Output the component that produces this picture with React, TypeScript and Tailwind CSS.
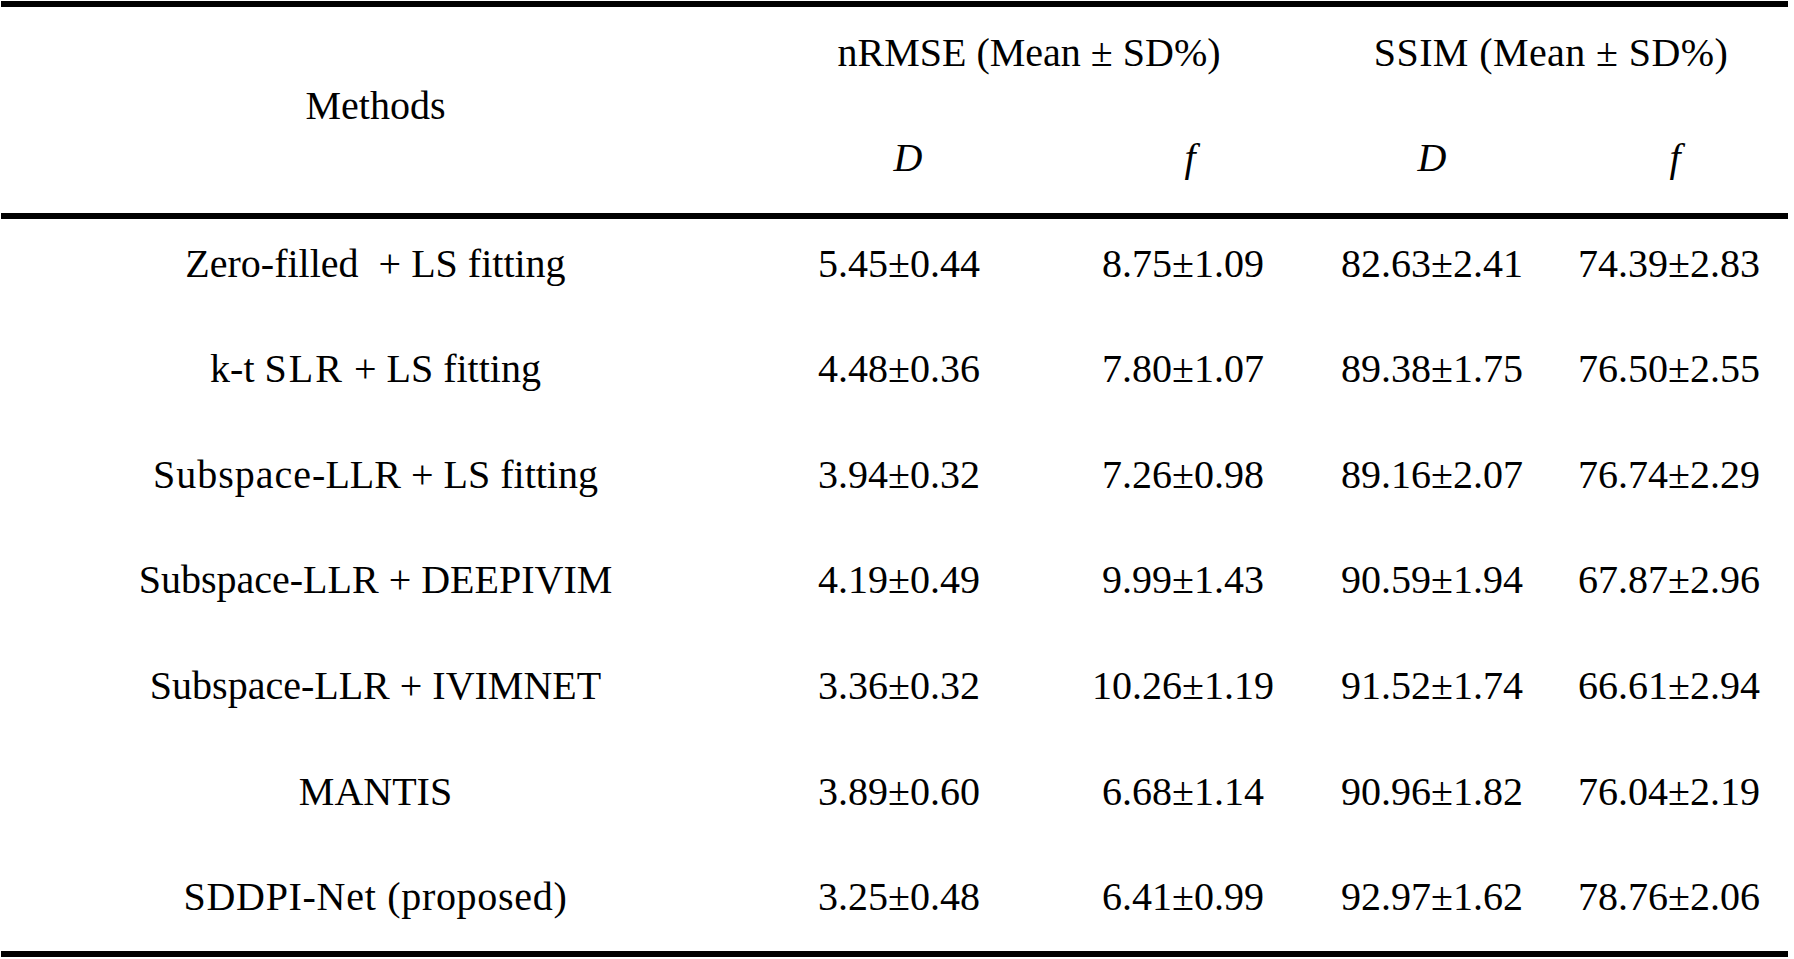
import type { ReactNode } from "react"

type Row = {
  key: string
  method: ReactNode
  nD: string
  nF: string
  sD: string
  sF: string
}

const rows: Row[] = [
  { key: "zf", method: "Zero-filled  + LS fitting", nD: "5.45±0.44", nF: "8.75±1.09", sD: "82.63±2.41", sF: "74.39±2.83" },
  {
    key: "kt",
    method: (
      <>
        k-t <span className="tracking-[2px]">SLR</span> + LS fitting
      </>
    ),
    nD: "4.48±0.36",
    nF: "7.80±1.07",
    sD: "89.38±1.75",
    sF: "76.50±2.55",
  },
  {
    key: "ls",
    method: (
      <>
        <span className="tracking-[1px]">Subspace</span>-LLR + LS fitting
      </>
    ),
    nD: "3.94±0.32",
    nF: "7.26±0.98",
    sD: "89.16±2.07",
    sF: "76.74±2.29",
  },
  { key: "deep", method: "Subspace-LLR + DEEPIVIM", nD: "4.19±0.49", nF: "9.99±1.43", sD: "90.59±1.94", sF: "67.87±2.96" },
  { key: "ivim", method: "Subspace-LLR + IVIMNET", nD: "3.36±0.32", nF: "10.26±1.19", sD: "91.52±1.74", sF: "66.61±2.94" },
  { key: "mantis", method: "MANTIS", nD: "3.89±0.60", nF: "6.68±1.14", sD: "90.96±1.82", sF: "76.04±2.19" },
  {
    key: "sddpi",
    method: <span className="tracking-[0.7px]">SDDPI-Net (proposed)</span>,
    nD: "3.25±0.48",
    nF: "6.41±0.99",
    sD: "92.97±1.62",
    sF: "78.76±2.06",
  },
]

const cols = "grid grid-cols-[749px_298px_270px_228px_242px]"

export default function App() {
  return (
    <div className="w-[1794px] h-[959px] bg-white pl-[1px] pt-[1px] text-black font-[family-name:'Liberation_Serif','Times_New_Roman',serif] text-[40px] leading-[40px]">
      <div className="w-[1787px] border-t-[6px] border-b-[6px] border-black">
        {/* header */}
        <div className={`${cols} grid-rows-[105px_101px] border-b-[6px] border-black`}>
          <div className="row-span-2 pt-[78.5px] text-center whitespace-pre">Methods</div>
          <div className="col-span-2 pt-[25.5px] pr-[10px] text-center whitespace-pre">nRMSE (Mean ± SD%)</div>
          <div className="col-span-2 pt-[25.5px] pr-[4px] text-center whitespace-pre tracking-[0.4px]">SSIM (Mean ± SD%)</div>
          <div className="pt-[25.5px] pl-[18px] text-center italic">D</div>
          <div className="pt-[25.5px] pl-[14px] text-center italic">f</div>
          <div className="pt-[25.5px] text-center italic">D</div>
          <div className="pt-[25.5px] pl-[16px] text-center italic">f</div>
        </div>

        {/* body */}
        <div className="flex flex-col gap-[65.67px] pt-[24.5px] pb-[33.5px]">
          {rows.map((r) => (
            <div key={r.key} className={`${cols} h-[40px]`}>
              <div className="text-center whitespace-pre">{r.method}</div>
              <div className="text-center">{r.nD}</div>
              <div className="text-center">{r.nF}</div>
              <div className="text-center">{r.sD}</div>
              <div className="pl-[4px] text-center">{r.sF}</div>
            </div>
          ))}
        </div>
      </div>
    </div>
  )
}
